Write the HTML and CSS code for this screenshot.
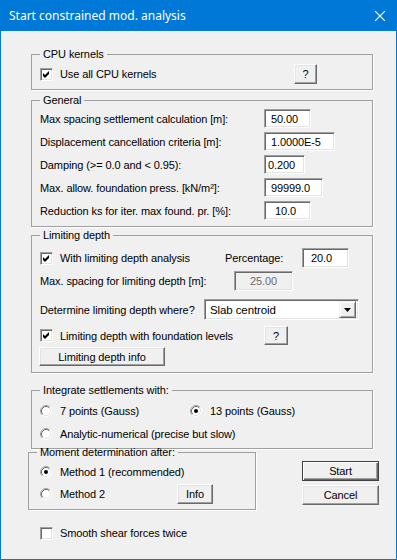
FILE: index.html
```html
<!DOCTYPE html>
<html lang="en">
<head>
  <meta charset="UTF-8" />
  <title>Start constrained mod. analysis</title>
  <link rel="stylesheet" href="styles.css">
</head>
<body>
  <svg class="defs" width="0" height="0">
    <symbol id="radio" viewBox="0 0 12 12">
      <circle cx="6" cy="6" r="5" fill="#fff"/>
      <path d="M2.11 9.89 A5.5 5.5 0 0 1 9.89 2.11" fill="none" stroke="#a0a0a0"/>
      <path d="M9.89 2.11 A5.5 5.5 0 0 1 2.11 9.89" fill="none" stroke="#fff"/>
      <path d="M2.82 9.18 A4.5 4.5 0 0 1 9.18 2.82" fill="none" stroke="#696969"/>
      <path d="M9.18 2.82 A4.5 4.5 0 0 1 2.82 9.18" fill="none" stroke="#e3e3e3"/>
    </symbol>
    <symbol id="tick" viewBox="0 0 13 13">
      <path d="M3 5 L5 7 L9 3 L9 6 L5 10 L3 8 Z" fill="#000"/>
    </symbol>
  </svg>

  <div class="dialog">
    <div class="titlebar">
      <span class="title">Start constrained mod. analysis</span>
      <svg class="close" width="10" height="10" viewBox="0 0 10 10">
        <path d="M0 0 L10 10 M10 0 L0 10" stroke="#fff" stroke-width="1.1"/>
      </svg>
    </div>

    <div class="content">
      <fieldset class="group g-cpu">
        <legend>CPU kernels</legend>
        <div class="row">
          <label class="check w-cpu"><span class="cb"><svg><use href="#tick"/></svg></span>Use all CPU kernels</label>
          <button class="btn btn-q">?</button>
        </div>
      </fieldset>

      <fieldset class="group g-general">
        <legend>General</legend>
        <div class="form-row"><span class="lbl">Max spacing settlement calculation [m]:</span><input class="field w47" value="50.00"></div>
        <div class="form-row"><span class="lbl">Displacement cancellation criteria [m]:</span><input class="field w71" value="1.0000E-5"></div>
        <div class="form-row"><span class="lbl">Damping (&gt;= 0.0 and &lt; 0.95):</span><input class="field w41 tight" value="0.200"></div>
        <div class="form-row"><span class="lbl">Max. allow. foundation press. [kN/m²]:</span><input class="field w59" value="99999.0"></div>
        <div class="form-row"><span class="lbl">Reduction ks for iter. max found. pr. [%]:</span><input class="field w47 wide" value="10.0"></div>
      </fieldset>

      <fieldset class="group g-limit">
        <legend>Limiting depth</legend>
        <div class="row r1">
          <label class="check w-lim"><span class="cb"><svg><use href="#tick"/></svg></span>With limiting depth analysis</label>
          <span class="pct">Percentage:</span>
          <input class="field w47 pct-field" value="20.0">
        </div>
        <div class="row r2">
          <span class="lbl-spacing">Max. spacing for limiting depth [m]:</span>
          <input class="field disabled" value="25.00" disabled>
        </div>
        <div class="row r3">
          <span class="lbl-where">Determine limiting depth where?</span>
          <div class="combo">
            <span class="combo-text">Slab centroid</span>
            <span class="combo-arrow"><svg width="7" height="4" viewBox="0 0 7 4"><path d="M0 0 H7 L3.5 4 Z" fill="#000"/></svg></span>
          </div>
        </div>
        <div class="row r4">
          <label class="check w-found"><span class="cb"><svg><use href="#tick"/></svg></span>Limiting depth with foundation levels</label>
          <button class="btn btn-q2">?</button>
        </div>
        <div class="row r5">
          <button class="btn btn-info-lim">Limiting depth info</button>
        </div>
      </fieldset>

      <fieldset class="group g-integrate">
        <legend>Integrate settlements with:</legend>
        <div class="row r1">
          <label class="radio w-seven"><svg class="rd"><use href="#radio"/></svg>7 points (Gauss)</label>
          <label class="radio"><svg class="rd"><use href="#radio"/><circle cx="6" cy="6" r="2" fill="#000"/></svg>13 points (Gauss)</label>
        </div>
        <div class="row r2">
          <label class="radio"><svg class="rd"><use href="#radio"/></svg>Analytic-numerical (precise but slow)</label>
        </div>
      </fieldset>

      <div class="bottom">
        <fieldset class="group g-moment">
          <legend>Moment determination after:</legend>
          <div class="row r1">
            <label class="radio"><svg class="rd"><use href="#radio"/><circle cx="6" cy="6" r="2" fill="#000"/></svg>Method 1 (recommended)</label>
          </div>
          <div class="row r2">
            <label class="radio w-m2"><svg class="rd"><use href="#radio"/></svg>Method 2</label>
            <button class="btn btn-info">Info</button>
          </div>
        </fieldset>
        <div class="actions">
          <button class="btn btn-default">Start</button>
          <button class="btn btn-action">Cancel</button>
        </div>
      </div>

      <div class="row smooth">
        <label class="check"><span class="cb"></span>Smooth shear forces twice</label>
      </div>
    </div>
  </div>
</body>
</html>
```

FILE: styles.css
```css
* { box-sizing: border-box; }
body { margin: 0; background: #f0f0f0; font-family: "Liberation Sans", Arial, sans-serif; font-size: 11px; letter-spacing: -0.1px; color: #000; }
.defs { position: absolute; }

.dialog { width: 397px; height: 560px; background: #f0f0f0; border: 1px solid #0078d7; border-top: none; }
.titlebar { height: 31px; background: #0078d7; margin: 0 -1px; display: flex; align-items: center; padding: 0 12px 0 9px; }
.title { flex: 1; color: #fff; font-family: "Noto Sans", sans-serif; font-size: 12px; letter-spacing: 0; }
.close { display: block; }

.content { padding-top: 17px; }

.group { width: 342px; margin: 0 0 0 30px; padding: 0 8px; border: 1px solid #a0a0a0; box-shadow: 1px 1px 0 #fff; }
.group legend { padding: 0 3px; line-height: 13px; }

.row { display: flex; align-items: center; }
.check, .radio { display: flex; align-items: center; height: 20px; }
.cb { width: 13px; height: 13px; margin-right: 7px; background: #fff; border: 1px solid; border-color: #a0a0a0 #fff #fff #a0a0a0; box-shadow: inset 1px 1px 0 #696969, inset -1px -1px 0 #e3e3e3; position: relative; }
.cb svg { position: absolute; left: -1px; top: -1px; width: 13px; height: 13px; }
.rd { width: 12px; height: 12px; margin-right: 8px; }

.btn { font: 11px "Liberation Sans", Arial, sans-serif; letter-spacing: -0.1px; color: #000; background: #f0f0f0; padding: 0; border: 1px solid; border-color: #fff #696969 #696969 #fff; box-shadow: inset -1px -1px 0 #a0a0a0, inset 1px 1px 0 #e3e3e3; }

.field { height: 19px; font: 11px "Liberation Sans", Arial, sans-serif; letter-spacing: -0.1px; color: #000; background: #fff; padding: 0 6px; border: 1px solid; border-color: #a0a0a0 #fff #fff #a0a0a0; box-shadow: inset 1px 1px 0 #696969, inset -1px -1px 0 #e3e3e3; }
.field.tight { padding-left: 3px; }
.field.wide { padding-left: 10px; }
.w41 { width: 41px; }
.w47 { width: 47px; }
.w59 { width: 59px; }
.w71 { width: 71px; }

/* CPU */
.g-cpu .row { margin: 3px 0 5px; }
.w-cpu { width: 254px; }
.btn-q { width: 23px; height: 20px; }

/* General */
.g-general { margin-top: 4px; padding-top: 2px; padding-bottom: 6px; }
.form-row { display: flex; align-items: center; height: 19px; margin-bottom: 4px; }
.form-row:last-child { margin-bottom: 0; }
.lbl { width: 224px; }

/* Limiting depth */
.g-limit { margin-top: 2px; padding-top: 6px; padding-bottom: 6px; }
.g-limit .r1 { height: 20px; }
.w-lim { width: 185px; }
.pct { width: 77px; }
.pct-field { height: 20px; padding-left: 8px; }
.g-limit .r2 { height: 20px; margin-top: 3px; }
.lbl-spacing { width: 194px; }
.field.disabled { width: 59px; height: 20px; background: #f0f0f0; color: #6d6d6d; text-align: center; }
.g-limit .r3 { height: 21px; margin-top: 8px; }
.lbl-where { width: 164px; }
.combo { width: 155px; height: 21px; display: flex; align-items: center; background: #fff; border: 1px solid; border-color: #a0a0a0 #fff #fff #a0a0a0; box-shadow: inset 1px 1px 0 #696969, inset -1px -1px 0 #e3e3e3; padding: 0 2px 0 5px; }
.combo-text { flex: 1; font-size: 11.5px; }
.combo-arrow { width: 17px; height: 17px; display: flex; align-items: center; justify-content: center; background: #f0f0f0; border: 1px solid; border-color: #f0f0f0 #696969 #696969 #f0f0f0; box-shadow: inset 1px 1px 0 #fff, inset -1px -1px 0 #a0a0a0; }
.g-limit .r4 { height: 19px; margin-top: 6px; }
.w-found { width: 224px; }
.btn-q2 { width: 24px; height: 19px; }
.g-limit .r5 { height: 19px; margin-top: 2px; }
.btn-info-lim { width: 126px; height: 19px; margin-left: -1px; }

/* Integrate */
.g-integrate { margin-top: 11px; padding-top: 4px; padding-bottom: 4px; }
.g-integrate .r2 { margin-top: 3px; }
.w-seven { width: 150px; }

/* Moment + buttons */
.bottom { display: flex; align-items: flex-start; margin-top: -3px; }
.g-moment { width: 228px; margin-left: 27px; padding: 3px 8px 5px 11px; }
.g-moment legend { margin-left: -3px; }
.g-moment .r2 { margin-top: 2px; }
.w-m2 { width: 137px; }
.btn-info { width: 36px; height: 20px; }
.actions { display: flex; flex-direction: column; gap: 4px; margin: 15px 0 0 46px; }
.btn-default, .btn-action { width: 77px; height: 20px; }
.btn-default { border-color: #404040; box-shadow: inset 1px 1px 0 #fff, inset -1px -1px 0 #696969, inset -2px -2px 0 #a0a0a0; }

.smooth { margin: 13px 0 0 39px; }
```
